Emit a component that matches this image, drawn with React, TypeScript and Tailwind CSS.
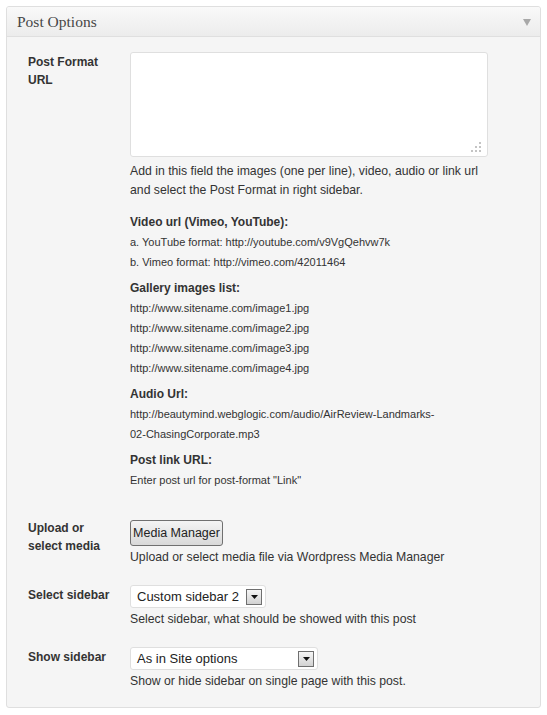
import React from 'react';

const gallery = [
  'http://www.sitename.com/image1.jpg',
  'http://www.sitename.com/image2.jpg',
  'http://www.sitename.com/image3.jpg',
  'http://www.sitename.com/image4.jpg',
];

function Section({ title, lines, first }: { title: string; lines: React.ReactNode[]; first?: boolean }) {
  return (
    <div className={first ? 'mt-[12px]' : 'mt-[6px]'}>
      <div className="text-[12px] font-bold leading-[20px] text-[#333]">{title}</div>
      {lines.map((l, i) => (
        <div key={i} className="text-[11px] leading-[20px] text-[#333]">{l}</div>
      ))}
    </div>
  );
}

function SelectBox({ value, width }: { value: string; width: string }) {
  return (
    <div className={`flex h-[23px] items-center justify-between rounded-[3px] border border-[#dfdfdf] bg-white pl-[6px] pr-[3px] ${width}`}>
      <span className="text-[13px] leading-[16px] text-[#222]">{value}</span>
      <span className="flex h-[16px] w-[16px] items-center justify-center border border-[#6f6f6f] bg-gradient-to-b from-[#f6f6f6] to-[#d2d2d2]">
        <svg width="7" height="4" viewBox="0 0 7 4">
          <polygon points="0,0 7,0 3.5,4" fill="#111" />
        </svg>
      </span>
    </div>
  );
}

export default function App() {
  return (
    <div className="min-h-[715px] bg-white p-[6px] font-['Liberation_Sans',Arial,sans-serif] text-[#333]">
      <div className="overflow-hidden rounded-[3px] border border-[#dfdfdf] bg-[#f5f5f5]">
        <div className="flex h-[30px] items-center justify-between border-b border-[#dfdfdf] bg-gradient-to-b from-[#f9f9f9] to-[#ececec] pl-[10px] pr-[9px]">
          <span className="font-['Liberation_Serif',Georgia,serif] text-[15.5px] text-[#464646]">Post Options</span>
          <svg width="8" height="7" viewBox="0 0 8 7" className="mt-[1px]">
            <polygon points="0,0 8,0 4,7" fill="#a8a8a8" />
          </svg>
        </div>

        <div className="pb-[16px] pl-[21px] pt-[15px]">
          {/* Post format url */}
          <div className="flex">
            <div className="w-[102px] pt-[1px] text-[12px] font-bold leading-[18px]">
              Post Format
              <br />
              URL
            </div>
            <div className="w-[358px]">
              <div className="relative h-[105px] rounded-[3px] border border-[#dfdfdf] bg-white">
                <svg width="11" height="11" viewBox="0 0 11 11" className="absolute bottom-[3px] right-[5px]">
                  <rect x="8" y="0" width="2" height="2" fill="#c4c4c4" />
                  <rect x="4" y="4" width="2" height="2" fill="#c4c4c4" />
                  <rect x="8" y="4" width="2" height="2" fill="#c4c4c4" />
                  <rect x="0" y="8" width="2" height="2" fill="#c4c4c4" />
                  <rect x="4" y="8" width="2" height="2" fill="#c4c4c4" />
                  <rect x="8" y="8" width="2" height="2" fill="#c4c4c4" />
                </svg>
              </div>
              <div className="mt-[5px] text-[12.25px] leading-[19px]">
                Add in this field the images (one per line), video, audio or link url
                <br />
                and select the Post Format in right sidebar.
              </div>
              <Section
                first
                title="Video url (Vimeo, YouTube):"
                lines={['a. YouTube format: http://youtube.com/v9VgQehvw7k', 'b. Vimeo format: http://vimeo.com/42011464']}
              />
              <Section title="Gallery images list:" lines={gallery} />
              <Section
                title="Audio Url:"
                lines={['http://beautymind.webglogic.com/audio/AirReview-Landmarks-', '02-ChasingCorporate.mp3']}
              />
              <Section title="Post link URL:" lines={['Enter post url for post-format "Link"']} />
            </div>
          </div>

          {/* Media */}
          <div className="mt-[29px] flex">
            <div className="w-[102px] text-[12px] font-bold leading-[18px]">
              Upload or
              <br />
              select media
            </div>
            <div>
              <button className="mt-[1px] h-[26px] w-[93px] rounded-[3px] border border-[#707070] bg-gradient-to-b from-[#f4f4f4] to-[#d9d9d9] text-[12.5px] text-[#222]">
                Media Manager
              </button>
              <div className="mt-[2px] text-[12.25px] leading-[19px]">Upload or select media file via Wordpress Media Manager</div>
            </div>
          </div>

          {/* Select sidebar */}
          <div className="mt-[18px] flex">
            <div className="w-[102px] pt-[1px] text-[12px] font-bold leading-[18px]">Select sidebar</div>
            <div>
              <SelectBox value="Custom sidebar 2" width="w-[136px]" />
              <div className="mt-[2px] text-[12.25px] leading-[19px]">Select sidebar, what should be showed with this post</div>
            </div>
          </div>

          {/* Show sidebar */}
          <div className="mt-[18px] flex">
            <div className="w-[102px] pt-[1px] text-[12px] font-bold leading-[18px]">Show sidebar</div>
            <div>
              <SelectBox value="As in Site options" width="w-[188px]" />
              <div className="mt-[2px] text-[12.25px] leading-[19px]">Show or hide sidebar on single page with this post.</div>
            </div>
          </div>
        </div>
      </div>
    </div>
  );
}
